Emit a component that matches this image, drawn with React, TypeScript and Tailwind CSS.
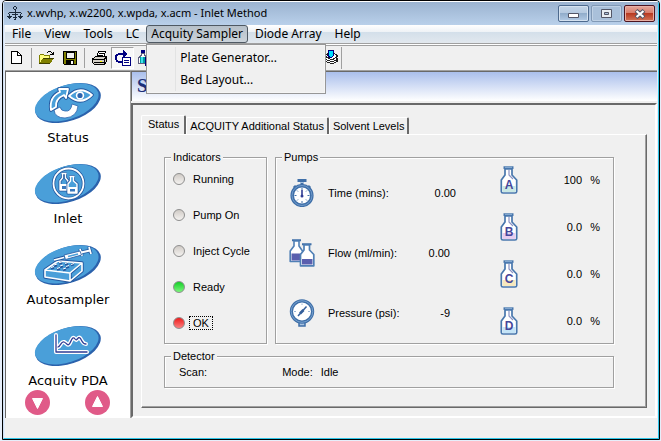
import type { ReactNode } from "react";

const OVAL = { cx: 34, cy: 22, rx: 34, ry: 18 };

interface NavItemProps {
    label: string;
    children: ReactNode;
}

const NavItem = ({ label, children }: NavItemProps) => {
    return (
        <button type="button" className="flex h-[81px] w-full shrink-0 flex-col items-center">
            <svg viewBox="0 0 68 44" className="h-11 w-[68px]" fill="none">
                <g transform="rotate(-18 34 22)">
                    <ellipse cx={OVAL.cx} cy={OVAL.cy} rx={OVAL.rx} ry={OVAL.ry} fill="#2b62ac" />
                    <ellipse cx={OVAL.cx - 1} cy={OVAL.cy - 1} rx={OVAL.rx - 1} ry={OVAL.ry - 1} fill="#4a9fd9" />
                </g>
                {children}
            </svg>
            <span className="mt-1 font-['DejaVu_Sans',sans-serif] text-[13px] leading-[18px]">{label}</span>
        </button>
    );
};

const StatusGlyph = () => (
    <g strokeLinejoin="round">
        <path d="M20 29Q21 37 31 37Q43 36 44 25L38 23Q37 31 31 30Q27 30 26 26Z" fill="#fff" stroke="#2d64ad" strokeWidth="0.8" />
        <path d="M17 29Q15 16 26 11L25 8L34 8L32 17L30 14Q21 18 22 26Z" fill="#4a9fd9" stroke="#23579f" strokeWidth="3.6" />
        <path d="M17 29Q15 16 26 11L25 8L34 8L32 17L30 14Q21 18 22 26Z" fill="#4a9fd9" stroke="#fff" strokeWidth="1.8" />
        <path d="M35 15Q46 4 58 14Q47 25 35 15Z" fill="#4a9fd9" stroke="#23579f" strokeWidth="3.6" />
        <path d="M35 15Q46 4 58 14Q47 25 35 15Z" fill="#4a9fd9" stroke="#fff" strokeWidth="1.8" />
        <circle cx="46" cy="14.5" r="3.4" fill="#2d64ad" stroke="#fff" strokeWidth="1.6" />
    </g>
);

const InletGlyph = () => (
    <g strokeLinejoin="round">
        <circle cx="34.5" cy="21.5" r="15" stroke="#23579f" strokeWidth="3.4" />
        <circle cx="34.5" cy="21.5" r="15" stroke="#fff" strokeWidth="1.8" />
        <path d="M27.5 11.5H32.5M28.5 12V16L26 19V28H34V19L31.5 16V12" stroke="#23579f" strokeWidth="3" />
        <path d="M27.5 11.5H32.5M28.5 12V16L26 19V28H34V19L31.5 16V12" stroke="#fff" strokeWidth="1.4" />
        <path d="M26 22H33V28H26Z" fill="#fff" />
        <path d="M28 24H32V27H28Z" fill="#3978bd" />
        <path d="M35.5 14.5H40.5M36.5 15V19L34 22V31H43V22L39.5 19V15" fill="#4a9fd9" stroke="#23579f" strokeWidth="3" />
        <path d="M35.5 14.5H40.5M36.5 15V19L34 22V31H43V22L39.5 19V15" fill="#4a9fd9" stroke="#fff" strokeWidth="1.4" />
        <path d="M34 25H43V31H34Z" fill="#fff" />
        <path d="M36 27H41V29.5H36Z" fill="#3978bd" />
    </g>
);

const AutosamplerGlyph = () => (
    <g strokeLinejoin="round">
        <path d="M11 27L24 18L48 20L36 30ZM11 27V34L36 38V30M36 38L48 28V20" fill="#4a9fd9" stroke="#23579f" strokeWidth="3.4" />
        <path d="M11 27L24 18L48 20L36 30ZM11 27V34L36 38V30M36 38L48 28V20" fill="#4a9fd9" stroke="#fff" strokeWidth="1.6" />
        <path d="M17 25.5l3-1M23 26.5l3-1M29 27l3-1M20 23l3-1M26 24l3-1M32 24.5l3-1M25 20.5l3-1M31 21.5l3-1M37 22l3-1" stroke="#23579f" strokeWidth="2.6" />
        <path d="M17 24.5l3-1M23 25.5l3-1M29 26l3-1M20 22l3-1M26 23l3-1M32 23.5l3-1M25 19.8l3-1M31 20.5l3-1M37 21.5l3-1" stroke="#fff" strokeWidth="1" />
        <path d="M20 17L30 14.5M47 9.5L56 7.5M55 4L57 11M46 6L48 13" stroke="#23579f" strokeWidth="3.4" />
        <path d="M20 17L30 14.5M47 9.5L56 7.5M55 4L57 11M46 6L48 13" stroke="#fff" strokeWidth="1.8" />
        <path d="M30 12L46 8L47.5 12L31.5 16.5Z" fill="#fff" stroke="#23579f" strokeWidth="0.8" />
        <path d="M34 13.5L44 11" stroke="#4a9fd9" strokeWidth="1.5" />
    </g>
);

const PdaGlyph = () => (
    <g strokeLinejoin="round" strokeLinecap="round">
        <path d="M22 11V28H53M24 23C27 22 27 17 30 18S34 23 36 19S39 12 41 15S44 12 46 14S48 20 52 20" stroke="#fff" strokeWidth="4" />
        <path d="M22 11V28H53M24 23C27 22 27 17 30 18S34 23 36 19S39 12 41 15S44 12 46 14S48 20 52 20" stroke="#303c94" strokeWidth="1.3" />
    </g>
);

const StopwatchIcon = () => (
    <svg viewBox="0 0 26 28" className="h-7 w-[26px]" fill="none">
        <path d="M8.5 1.5H17.5M13 2V6M5 7L7 9M21 7L19 9" stroke="#3f6fa8" strokeWidth="3" />
        <path d="M11 3.5H15" stroke="#a9c3e0" />
        <circle cx="13" cy="16.5" r="9.8" fill="#fff" stroke="#3f6fa8" strokeWidth="3.6" />
        <circle cx="13" cy="16.5" r="10" stroke="#7da6d3" strokeWidth="0.8" />
        <path d="M13 9V11M13 22V24M5.500 16.5H7.500M18.500 16.5H20.500M8 11.5l1 1M18 11.5l-1 1M8 21.5l1-1M18 21.5l-1-1" stroke="#3f6fa8" />
        <path d="M13 11V17" stroke="#303c94" strokeWidth="1.6" />
        <circle cx="13" cy="17" r="1.5" fill="#303c94" />
    </svg>
);

const FlowIcon = () => (
    <svg viewBox="0 0 26 28" className="h-7 w-[26px]" fill="none" strokeLinejoin="round">
        <path d="M3 1.2H12" stroke="#3f6fa8" strokeWidth="2" />
        <path d="M5 2V7L1.2 12V22.5H13.5V12L10 7V2Z" fill="#fff" stroke="#4f7fb5" strokeWidth="1.6" />
        <path d="M2.500 14.500H12V21.500H2.500Z" fill="#5a5fae" />
        <path d="M13 5.2H22.5" stroke="#3f6fa8" strokeWidth="2" />
        <path d="M15 6V11L11.5 15.5V26.800H24.800V15.5L20.5 11V6Z" fill="#fff" stroke="#4f7fb5" strokeWidth="1.7" />
        <path d="M13 20H23.500V25.500H13Z" fill="#5a5fae" />
    </svg>
);

const GaugeIcon = () => (
    <svg viewBox="0 0 26 28" className="h-7 w-[26px]" fill="none">
        <path d="M7 22L10 23V27H16V23L19 22Z" fill="#a9c3e0" stroke="#3f6fa8" strokeWidth="1.5" />
        <circle cx="13" cy="12.5" r="10.6" fill="#fff" stroke="#3f6fa8" strokeWidth="3.2" />
        <circle cx="13" cy="12.5" r="10.8" stroke="#7da6d3" strokeWidth="0.9" />
        <path d="M9 17L17.5 7.5" stroke="#345f9b" strokeWidth="1.5" />
        <path d="M11 14.5L14.5 11" stroke="#345f9b" strokeWidth="2.6" />
        <path d="M5 12.5H7M13 4.5V6M19 12.5H21" stroke="#9ab4d4" />
    </svg>
);

const SolventBottle = ({ letter, tint }: { letter: string; tint: string }) => (
    <svg viewBox="0 0 18 28" className="h-7 w-[18px]" strokeLinejoin="round">
        <path d="M5 3V9L1.3 14V25.5Q1.3 27 3 27H15Q16.7 27 16.7 25.5V14L12 9V3Z" fill="#fff" stroke="#4877ad" strokeWidth="1.7" />
        <path d="M2.5 20H15.5V26H2.5Z" fill={tint} />
        <path d="M9 4V9L13 13" fill="none" stroke="#8a93c4" strokeWidth="1.2" />
        <path d="M3.5 1.6H13.5" stroke="#4877ad" strokeWidth="2.6" />
        <path d="M5 1.3H12" stroke="#a6c3e2" strokeWidth="0.8" />
        <text x="9" y="23" textAnchor="middle" fill="#46469b" className="font-['Liberation_Sans',sans-serif] text-[12px] font-bold">
            {letter}
        </text>
    </svg>
);

const ToolButton = ({ label, pressed, children }: { label: string; pressed?: boolean; children: ReactNode }) => (
    <button
        type="button"
        aria-label={label}
        className={
            pressed
                ? "flex h-[22px] w-[23px] shrink-0 items-center justify-center border border-t-[#a0a0a0] border-r-white border-b-white border-l-[#a0a0a0] bg-[#f8f8f8]"
                : "flex h-[22px] w-[23px] shrink-0 items-center justify-center"
        }
    >
        <svg viewBox="0 0 16 16" className="size-4 shrink-0" fill="none" shapeRendering="crispEdges">
            {children}
        </svg>
    </button>
);

const ToolSeparator = () => <span className="mx-[3px] h-5 w-px shrink-0 bg-[#a0a0a0]" />;

const ListPaper = () => (
    <>
        <path d="M7.5 7.5H15.5V15.5H7.5Z" fill="#fff" stroke="#000080" />
        <path d="M9 10.5H14M9 12.5H14" stroke="#000080" />
    </>
);

const Toolbar = () => {
    return (
        <div className="flex h-[22px] items-center bg-[#f0f0f0]">
            <ToolButton label="New">
                <path d="M2.5 1.5H8.5L12.5 5.5V13.5H2.5Z" fill="#fff" stroke="#000" />
                <path d="M8.5 1.5V5.5H12.5" stroke="#000" />
            </ToolButton>
            <ToolSeparator />
            <ToolButton label="Open">
                <path d="M0.5 13.5V5.5L1.5 4.500H4.5L5.5 5.5H10.5V8.5" fill="#ffff80" stroke="#808000" />
                <path d="M0 14L4 8H15L11 14Z" fill="#808000" />
                <path d="M4 8.500H15M0 13.500H11" stroke="#404000" />
                <path d="M8 2.5H9M9 1.5H12M12 2.5H13M13 3.5H14M11 4.5H15M14.5 2V5" stroke="#000" />
            </ToolButton>
            <ToolButton label="Save">
                <path d="M1.5 1.5H14.5V14.5H2.5L1.5 13.5Z" fill="#808000" stroke="#000" />
                <path d="M4 2H12V8H4Z" fill="#f0f0f0" stroke="#000" />
                <path d="M4 10H12V14H4Z" fill="#000" />
                <path d="M9 11H11V14H9Z" fill="#fff" />
            </ToolButton>
            <ToolSeparator />
            <ToolButton label="Print">
                <path d="M4.5 7.5L6.5 1.5H13.5L11.5 7.5Z" fill="#fff" stroke="#000" />
                <path d="M7 3.5H12M6 5.5H11" stroke="#000" />
                <path d="M1.5 8.5L3.5 6.5H14.5V11.5L12.5 14.5H2.5L0.5 12.5V8.5Z" fill="#d4d0c8" stroke="#000" />
                <path d="M1 9.5H12M2 12.5H12M12.5 9V14M14.5 7L12.5 9" stroke="#000" />
                <path d="M8 11H10V12H8Z" fill="#ffff00" />
            </ToolButton>
            <ToolButton label="Status list" pressed>
                <path d="M7 12H4Q1 11 1 8Q1 4 5 4H9" stroke="#000080" strokeWidth="2" />
                <path d="M8 0L13 4L8 8Z" fill="#000080" />
                <ListPaper />
            </ToolButton>
            <ToolButton label="Inlet list">
                <path d="M3 0H7V3H3Z" fill="#000080" />
                <path d="M3.5 3V5L0.5 8V13.5H9.5V8L6.5 5V3Z" fill="#fff" stroke="#606080" />
                <path d="M2 7H8V13H2Z" fill="#00a0a0" />
                <path d="M3 7H5V13H3Z" fill="#40e0f0" />
                <ListPaper />
            </ToolButton>
            <span className="w-[161px] shrink-0" />
            <ToolButton label="Layers">
                <path d="M3 11L8 7L16 11L10 14Z" fill="#fff" stroke="#202020" />
                <path d="M3 9L8 5L16 9L10 12Z" fill="#fff" stroke="#202020" />
                <path d="M3 6L9 1L16 6L10 10Z" fill="#fff" stroke="#202020" />
                <path d="M6 0H11V5H12L9 8L5 5H6Z" fill="#00e0ff" stroke="#000080" />
            </ToolButton>
            <span className="h-[22px] w-px bg-[#a0a0a0]" />
        </div>
    );
};

const MENU_BEFORE = ["File", "View", "Tools", "LC"];
const MENU_AFTER = ["Diode Array", "Help"];
const SUBMENU = ["Plate Generator...", "Bed Layout..."];

const MenuBar = () => {
    return (
        <nav className="flex h-[18px] gap-px bg-[linear-gradient(#ffffff,#eef2f6_38%,#d3dfea_40%,#e2e8ee)] pl-px font-['Noto_Sans',sans-serif] text-[12px] leading-[18px]">
            {MENU_BEFORE.map((item) => (
                <button key={item} type="button" className="px-[6px]">
                    {item}
                </button>
            ))}
            <div className="relative">
                <button
                    type="button"
                    aria-expanded="true"
                    className="h-[18px] rounded-[3px] border border-[#4f5963] bg-[linear-gradient(#b6c0c9,#cbd3da)] px-1 leading-4"
                >
                    Acquity Sampler
                </button>
                <ul className="absolute top-[19px] left-0 z-10 w-[180px] border border-[#979797] bg-[#f0f0f0] p-[2px] shadow-[inset_0_0_0_1px_#f5f5f5]">
                    {SUBMENU.map((item) => (
                        <li key={item} className="flex h-[22px]">
                            <span className="mr-1 w-[27px] border-r border-[#e2e3e3]" />
                            <button type="button">{item}</button>
                        </li>
                    ))}
                </ul>
            </div>
            {MENU_AFTER.map((item) => (
                <button key={item} type="button" className="px-[6px]">
                    {item}
                </button>
            ))}
        </nav>
    );
};

const TitleBar = () => {
    return (
        <header className="flex h-6 items-start justify-between border-t border-white bg-[linear-gradient(#9bb3d0,#b9d0ea)] pl-[3px]">
            <div className="flex h-[23px] items-center gap-1">
                <svg viewBox="0 0 16 16" className="size-4" fill="none" stroke="#1c2b3c" shapeRendering="crispEdges">
                    <path d="M7 0.500H9M6.5 1V3M9.5 1V3M7 3.5H9M8 4V14M2 6.5H14M1.5 7V8M14.5 7V8M5 8.500H11M0 10.5H5M11 10.5H16M1 11.5H4M12 11.5H15M2.5 8V13M13.5 8V13M6 11.500H10M7 13.5H9" />
                </svg>
                <h1 className="font-['Noto_Sans',sans-serif] text-[11px]">x.wvhp, x.w2200, x.wpda, x.acm - Inlet Method</h1>
            </div>
            <div className="flex gap-[2px] pt-[3px] pr-[3px]">
                <button
                    type="button"
                    aria-label="Minimize"
                    className="flex h-[17px] w-[31px] items-center justify-center rounded-[2px] border border-[#4d6a8e] bg-[linear-gradient(#c3d4e7,#b4c9e0_48%,#91adcb_50%,#b3cbe5)] shadow-[inset_0_0_0_1px_#d5e2f0]"
                >
                    <svg viewBox="0 0 11 11" className="size-[11px]">
                        <path d="M0.5 5.5H10.5V9.5H0.5Z" fill="#fff" stroke="#535666" />
                    </svg>
                </button>
                <button
                    type="button"
                    aria-label="Maximize"
                    disabled
                    className="flex h-[17px] w-[31px] items-center justify-center rounded-[2px] border border-[#8199b6] bg-[#a9c0da] shadow-[inset_0_0_0_1px_#bfd1e5]"
                >
                    <svg viewBox="0 0 11 9" className="h-[9px] w-[11px]">
                        <path d="M0.5 0.5H10.5V8.5H0.5Z" fill="#e8edf2" stroke="#535666" />
                        <path d="M3.5 3.5H7.5V5.5H3.5Z" fill="#a9c0da" stroke="#535666" />
                    </svg>
                </button>
                <button
                    type="button"
                    aria-label="Close"
                    className="flex h-[17px] w-[31px] items-center justify-center rounded-[2px] border border-[#4c1420] bg-[linear-gradient(#e5a79b,#d87c6a_48%,#b83a22_50%,#d37558)] shadow-[inset_0_0_0_1px_#e9b0a5]"
                >
                    <svg viewBox="0 0 12 10" className="h-[10px] w-3">
                        <path d="M2 1.5L10 8.5M10 1.5L2 8.5" stroke="#535666" strokeWidth="4.2" />
                        <path d="M2.5 2L9.5 8M9.5 2L2.5 8" stroke="#fff" strokeWidth="2.2" />
                    </svg>
                </button>
            </div>
        </header>
    );
};

const Sidebar = () => {
    return (
        <aside className="flex w-[125px] shrink-0 flex-col border-t border-l border-[#696969] bg-white">
            <div className="min-h-0 flex-1 overflow-hidden pt-[9px]">
                <NavItem label="Status">
                    <StatusGlyph />
                </NavItem>
                <NavItem label="Inlet">
                    <InletGlyph />
                </NavItem>
                <NavItem label="Autosampler">
                    <AutosamplerGlyph />
                </NavItem>
                <NavItem label="Acquity PDA">
                    <PdaGlyph />
                </NavItem>
            </div>
            <div className="flex h-8 items-center justify-between pr-5 pl-[19px]">
                <button type="button" aria-label="Scroll down">
                    <svg viewBox="0 0 25 25" className="size-[25px]">
                        <circle cx="12.5" cy="12.5" r="12.5" fill="#e05a88" />
                        <path d="M7.500 8.5H17.500L12.5 18.500Z" fill="#fff" stroke="#fff" strokeLinejoin="round" />
                    </svg>
                </button>
                <button type="button" aria-label="Scroll up">
                    <svg viewBox="0 0 25 25" className="size-[25px]">
                        <circle cx="12.5" cy="12.5" r="12.5" fill="#e05a88" />
                        <path d="M7.500 16.500H17.500L12.5 6.5Z" fill="#fff" stroke="#fff" strokeLinejoin="round" />
                    </svg>
                </button>
            </div>
        </aside>
    );
};

const LED_OFF = "border-[#8e8e8e] bg-[linear-gradient(#d0cbc6,#f4f2f0)]";

const INDICATORS = [
    { label: "Running", led: LED_OFF },
    { label: "Pump On", led: LED_OFF },
    { label: "Inject Cycle", led: LED_OFF },
    { label: "Ready", led: "border-[#8e8e8e] bg-[linear-gradient(#14cf28,#7cf57c)]" },
    { label: "OK", led: "border-[#8e8e8e] bg-[linear-gradient(#ee1c1c,#fb8080)]", focused: true },
];

const READINGS = [
    { label: "Time (mins):", value: "0.00", icon: <StopwatchIcon />, valueClass: "" },
    { label: "Flow (ml/min):", value: "0.00", icon: <FlowIcon />, valueClass: "pr-[6px]" },
    { label: "Pressure (psi):", value: "-9", icon: <GaugeIcon />, valueClass: "pr-[6px]" },
];

const SOLVENTS = [
    { letter: "A", value: "100", tint: "#c9e8e4" },
    { letter: "B", value: "0.0", tint: "#e6cdf0" },
    { letter: "C", value: "0.0", tint: "#f7e8bd" },
    { letter: "D", value: "0.0", tint: "#c4e4f7" },
];

const Group = ({ title, className, children }: { title: string; className: string; children: ReactNode }) => (
    <fieldset className={`min-w-0 border border-[#a0a0a0] shadow-[1px_1px_0_#fff,inset_1px_1px_0_#fff] ${className}`}>
        <legend className="ml-[6px] h-3 bg-[#f0f0f0] px-[2px] leading-3">{title}</legend>
        {children}
    </fieldset>
);

const StatusPanel = () => {
    return (
        <section className="flex flex-1 flex-col border border-t-white border-r-[#696969] border-b-[#696969] border-l-white pt-4 pr-8 pb-[19px] pl-[22px] shadow-[inset_-1px_-1px_0_#a0a0a0]">
            <div className="flex flex-1 gap-2">
                <Group title="Indicators" className="w-[103px] shrink-0">
                    <ul className="flex flex-col gap-6 pt-[10px] pl-2">
                        {INDICATORS.map(({ label, led, focused }) => (
                            <li key={label} className="flex h-3 items-center gap-2">
                                <span className={`size-3 rounded-full border ${led}`} />
                                <span className={focused ? "-ml-1 border border-dotted border-black px-[3px] leading-3" : "leading-3"}>
                                    {label}
                                </span>
                            </li>
                        ))}
                    </ul>
                </Group>
                <Group title="Pumps" className="flex-1">
                    <div className="flex justify-between px-[13px]">
                        <dl>
                            {READINGS.map(({ label, value, icon, valueClass }) => (
                                <div key={label} className="flex h-[60px] w-[167px] items-center">
                                    <dt className="flex items-center gap-[13px]">
                                        {icon}
                                        {label}
                                    </dt>
                                    <dd className={`ml-auto ${valueClass}`}>{value}</dd>
                                </div>
                            ))}
                        </dl>
                        <ul className="flex flex-col gap-[19px] pt-[3px]">
                            {SOLVENTS.map(({ letter, value, tint }) => (
                                <li key={letter} className="flex h-7 items-center">
                                    <SolventBottle letter={letter} tint={tint} />
                                    <span className="w-16 text-right leading-3">{value}</span>
                                    <span className="w-[18px] text-right leading-3">%</span>
                                </li>
                            ))}
                        </ul>
                    </div>
                </Group>
            </div>
            <Group title="Detector" className="mt-[6px] h-[38px] shrink-0">
                <div className="flex gap-[75px] pt-1 pl-[14px] leading-3">
                    <span>Scan:</span>
                    <span className="flex gap-2">
                        <span>Mode:</span>
                        <span>Idle</span>
                    </span>
                </div>
            </Group>
        </section>
    );
};

const TABS = ["ACQUITY Additional Status", "Solvent Levels"];

export default function App() {
    return (
        <div className="h-screen bg-[#e6eefa] pr-px pb-px pl-[2px] text-black">
            <div className="flex h-full flex-col overflow-hidden rounded-t-[4px] border border-black">
                <div className="flex min-h-0 flex-1 flex-col border-r border-b border-l border-r-[#2fc6e8] border-b-[#2fc6e8] border-l-[#cfe0f3]">
                    <TitleBar />
                    <div className="mr-px ml-px flex min-h-0 flex-1 flex-col bg-[#f0f0f0]">
                        <MenuBar />
                        <div className="mb-px h-[3px] border-y border-[#a0a0a0] bg-white" />
                        <Toolbar />
                        <div className="mt-px flex min-h-0 flex-1 border-t border-[#a0a0a0]">
                            <Sidebar />
                            <main className="flex min-w-0 flex-1 flex-col border-t border-l border-t-[#696969] border-l-[#a0a0a0]">
                                <h2 className="h-[29px] shrink-0 border-l border-[#696969] bg-[linear-gradient(#aabfec,#ffffff)] pl-[5px] font-['Liberation_Serif',serif] text-[19px] leading-7 font-bold text-[#1c2f78]">
                                    Status
                                </h2>
                                <div className="mt-[2px] flex flex-1 flex-col border-2 border-t-[#696969] border-r-white border-b-white border-l-[#696969] pt-[10px] pr-2 pb-2 pl-2 font-['Liberation_Sans',sans-serif] text-[11px] leading-3">
                                    <div role="tablist" className="flex items-end">
                                        <button
                                            type="button"
                                            role="tab"
                                            aria-selected="true"
                                            className="-mb-px h-5 rounded-t-[2px] border-t border-r-2 border-l border-t-white border-r-[#696969] border-l-white bg-[#f0f0f0] pr-[5px] pb-1 pl-[6px]"
                                        >
                                            Status
                                        </button>
                                        {TABS.map((tab) => (
                                            <button
                                                key={tab}
                                                type="button"
                                                role="tab"
                                                aria-selected="false"
                                                className="h-[17px] rounded-t-[2px] border-t border-r-2 border-l border-t-white border-r-[#696969] border-l-white px-[3px]"
                                            >
                                                {tab}
                                            </button>
                                        ))}
                                    </div>
                                    <StatusPanel />
                                </div>
                            </main>
                        </div>
                        <footer className="h-5 shrink-0 bg-[#f0f0f0]" />
                    </div>
                </div>
            </div>
        </div>
    );
}
